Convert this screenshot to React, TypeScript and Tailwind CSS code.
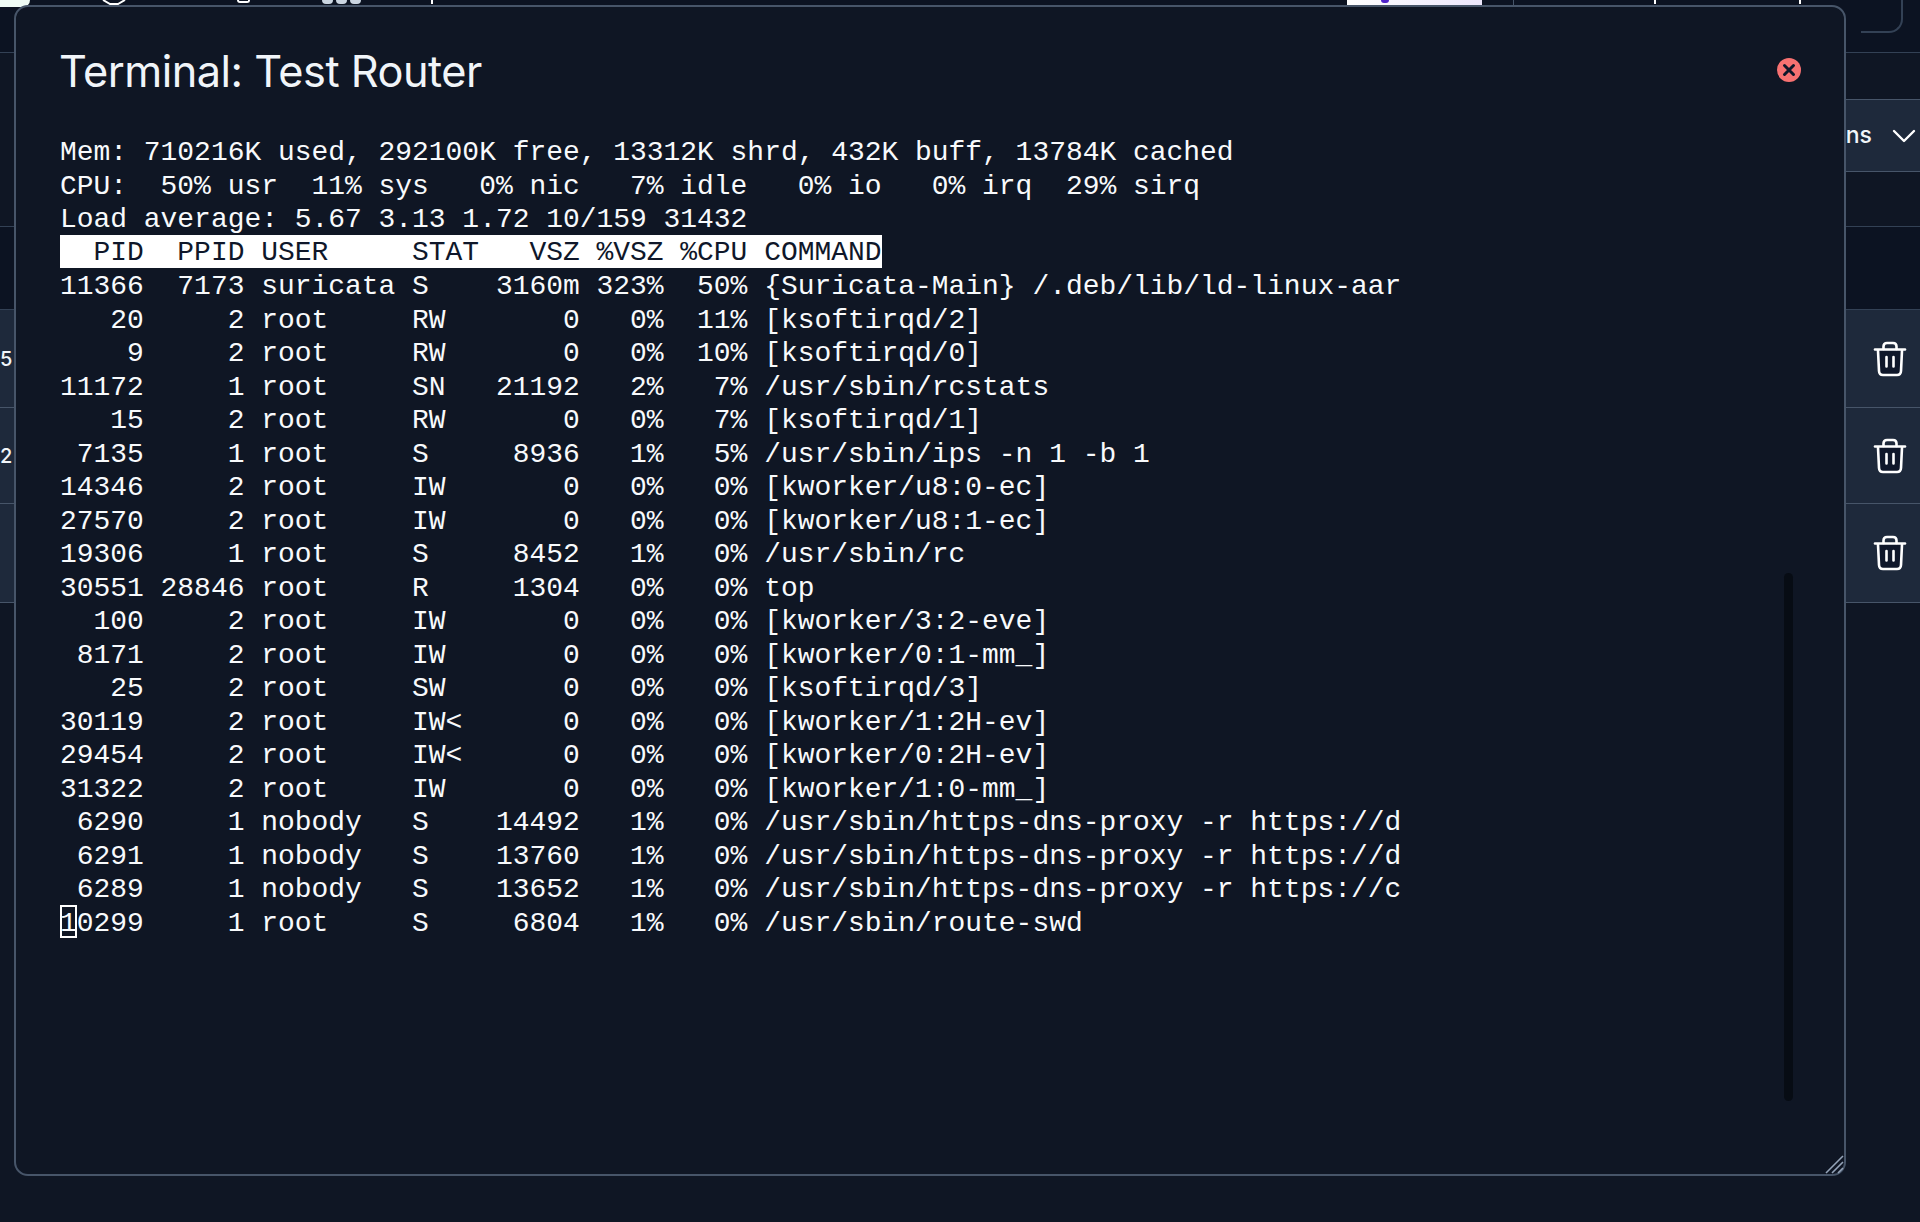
import React from "react";

const rows: [string, string, string, string, string, string, string, string][] = [
  ["11366", "7173", "suricata", "S", "3160m", "323%", "50%", "{Suricata-Main} /.deb/lib/ld-linux-aar"],
  ["20", "2", "root", "RW", "0", "0%", "11%", "[ksoftirqd/2]"],
  ["9", "2", "root", "RW", "0", "0%", "10%", "[ksoftirqd/0]"],
  ["11172", "1", "root", "SN", "21192", "2%", "7%", "/usr/sbin/rcstats"],
  ["15", "2", "root", "RW", "0", "0%", "7%", "[ksoftirqd/1]"],
  ["7135", "1", "root", "S", "8936", "1%", "5%", "/usr/sbin/ips -n 1 -b 1"],
  ["14346", "2", "root", "IW", "0", "0%", "0%", "[kworker/u8:0-ec]"],
  ["27570", "2", "root", "IW", "0", "0%", "0%", "[kworker/u8:1-ec]"],
  ["19306", "1", "root", "S", "8452", "1%", "0%", "/usr/sbin/rc"],
  ["30551", "28846", "root", "R", "1304", "0%", "0%", "top"],
  ["100", "2", "root", "IW", "0", "0%", "0%", "[kworker/3:2-eve]"],
  ["8171", "2", "root", "IW", "0", "0%", "0%", "[kworker/0:1-mm_]"],
  ["25", "2", "root", "SW", "0", "0%", "0%", "[ksoftirqd/3]"],
  ["30119", "2", "root", "IW<", "0", "0%", "0%", "[kworker/1:2H-ev]"],
  ["29454", "2", "root", "IW<", "0", "0%", "0%", "[kworker/0:2H-ev]"],
  ["31322", "2", "root", "IW", "0", "0%", "0%", "[kworker/1:0-mm_]"],
  ["6290", "1", "nobody", "S", "14492", "1%", "0%", "/usr/sbin/https-dns-proxy -r https://d"],
  ["6291", "1", "nobody", "S", "13760", "1%", "0%", "/usr/sbin/https-dns-proxy -r https://d"],
  ["6289", "1", "nobody", "S", "13652", "1%", "0%", "/usr/sbin/https-dns-proxy -r https://c"],
];

const fmt = (r: string[]) =>
  r[0].padStart(5) +
  r[1].padStart(6) +
  " " +
  r[2].padEnd(8) +
  " " +
  r[3].padEnd(4) +
  r[4].padStart(6) +
  " " +
  r[5].padStart(4) +
  " " +
  r[6].padStart(4) +
  " " +
  r[7];

const last = fmt(["10299", "1", "root", "S", "6804", "1%", "0%", "/usr/sbin/route-swd"]);

function Trash() {
  return (
    <svg width="34" height="36" viewBox="0 0 34 36" fill="none" stroke="#ffffff" strokeWidth="2.6" strokeLinecap="round" strokeLinejoin="round">
      <path d="M5 9.5 L6 30 Q6.2 34 10 34 H24 Q27.8 34 28 30 L29 9.5" fill="#0f172a" />
      <path d="M2 8.5 H32" />
      <path d="M10.5 8 V5.5 Q10.5 2 14 2 H20 Q23.5 2 23.5 5.5 V8" />
      <path d="M13.5 16 V25.5 M20.5 16 V25.5" />
    </svg>
  );
}

function Row({ left, icon }: { left?: string; icon?: boolean }) {
  return (
    <div className="flex h-full items-center justify-between border-b border-[#475569] bg-[#1e293b]">
      <span className="font-['Inter',sans-serif] text-[20px] font-medium text-[#f1f5f9]">{left}</span>
      {icon && (
        <span className="mr-[13px] flex">
          <Trash />
        </span>
      )}
    </div>
  );
}

export default function App() {
  return (
    <div className="relative h-[1222px] w-[1920px] overflow-hidden bg-[#0f1624] font-['Inter',sans-serif]">
      {/* page underneath the dialog */}
      <div className="flex h-[53px] items-start justify-between border-b border-[#334155] bg-[#0c1322]">
        <div className="flex h-[8px] items-start">
          <div className="h-[7px] w-[30px] rounded-br-[12px] bg-[#effbf5]" />
          <svg className="ml-[72px]" width="24" height="5" viewBox="0 0 24 5" fill="none" stroke="#ffffff" strokeWidth="2">
            <path d="M1 0 L8 4 H16 L23 0" />
          </svg>
          <div className="ml-[111px] h-[3px] w-[13px] rounded-b-full border-x-2 border-b-2 border-white" />
          <div className="ml-[72px] flex gap-[3px]">
            <div className="h-[4px] w-[11px] rounded-b-full bg-[#cbd5e1]" />
            <div className="h-[4px] w-[11px] rounded-b-full bg-[#cbd5e1]" />
            <div className="h-[4px] w-[11px] rounded-b-full bg-[#cbd5e1]" />
          </div>
          <div className="ml-[70px] h-[4px] w-[2px] bg-white" />
        </div>
        <div className="flex h-[33px] items-start">
          <div className="flex h-[5px] w-[135px] justify-start bg-gradient-to-r from-white to-[#ece6fb] pl-[34px]">
            <div className="h-[3px] w-[8px] rounded-b-full bg-[#4f22c9]" />
          </div>
          <div className="ml-[31px] h-[5px] w-px bg-[#475569]" />
          <div className="ml-[140px] h-[4px] w-[2px] bg-white" />
          <div className="ml-[143px] h-[4px] w-[2px] bg-white" />
          <div className="ml-[60px] h-[33px] w-[42px] rounded-br-[14px] border-r-2 border-b-2 border-[#334155]" />
          <div className="w-[17px]" />
        </div>
      </div>
      <div className="h-[46px]" />
      <div className="ml-auto flex h-[73px] w-[200px] items-center justify-end gap-[20px] border-y border-[#475569] bg-[#1e293b] pr-[4px]">
        <span className="text-[23px] font-medium text-[#f1f5f9]">ns</span>
        <svg width="24" height="14" viewBox="0 0 24 14" fill="none" stroke="#ffffff" strokeWidth="2.4" strokeLinecap="round" strokeLinejoin="round">
          <path d="M2 2 L12 12 L22 2" />
        </svg>
      </div>
      <div className="h-[54px]" />
      <div className="h-[84px] border-y border-[#334155] bg-[#0c1322]" />
      <div className="grid h-[293px] grid-rows-[98px_96px_99px]">
        <Row left="5" icon />
        <Row left="2" icon />
        <Row icon />
      </div>

      {/* dialog */}
      <div className="absolute left-[14px] top-[5px] h-[1171px] w-[1832px] rounded-[14px] border-2 border-[#475569] bg-[#0f1624] pl-[44px] pr-[43px] pt-[36px]">
        <div className="flex items-start justify-between">
          <h2 className="-ml-px text-[43.3px] font-normal leading-[56px] tracking-[-0.5px] text-[#f1f5f9]">Terminal: Test Router</h2>
          <button className="mt-[15px] flex">
            <svg width="24" height="24" viewBox="0 0 24 24">
              <circle cx="12" cy="12" r="12" fill="#f87171" />
              <path d="M7.5 7.5 L16.5 16.5 M16.5 7.5 L7.5 16.5" stroke="#0f172a" strokeWidth="3" strokeLinecap="round" />
            </svg>
          </button>
        </div>
        <div className="mt-[37px] whitespace-pre font-['Liberation_Mono',monospace] text-[27.95px] leading-[33.5px] text-[#f8fafc]">
          <div>Mem: 710216K used, 292100K free, 13312K shrd, 432K buff, 13784K cached</div>
          <div>CPU:  50% usr  11% sys   0% nic   7% idle   0% io   0% irq  29% sirq</div>
          <div>Load average: 5.67 3.13 1.72 10/159 31432</div>
          <div className="-mt-[2px] mb-[2px] h-[33.5px] w-fit bg-white leading-[35.5px] text-[#0f172a]">  PID  PPID USER     STAT   VSZ %VSZ %CPU COMMAND</div>
          {rows.map((r) => (
            <div key={r[0]}>{fmt(r)}</div>
          ))}
          <div className="relative">
            {last}
            <span className="absolute -top-[2px] left-0 h-[33.5px] w-[17px] border-2 border-white" />
          </div>
        </div>
        <div className="absolute left-[1768px] top-[566px] h-[528px] w-[9px] rounded-full bg-[#070c14]" />
        <svg className="absolute bottom-0 right-0" width="20" height="20" viewBox="0 0 20 20" stroke="#94a3b8" strokeWidth="1.6" fill="none">
          <path d="M2 19 L19 2 M8 19 L19 8 M14 19 L19 14" />
        </svg>
      </div>
    </div>
  );
}
